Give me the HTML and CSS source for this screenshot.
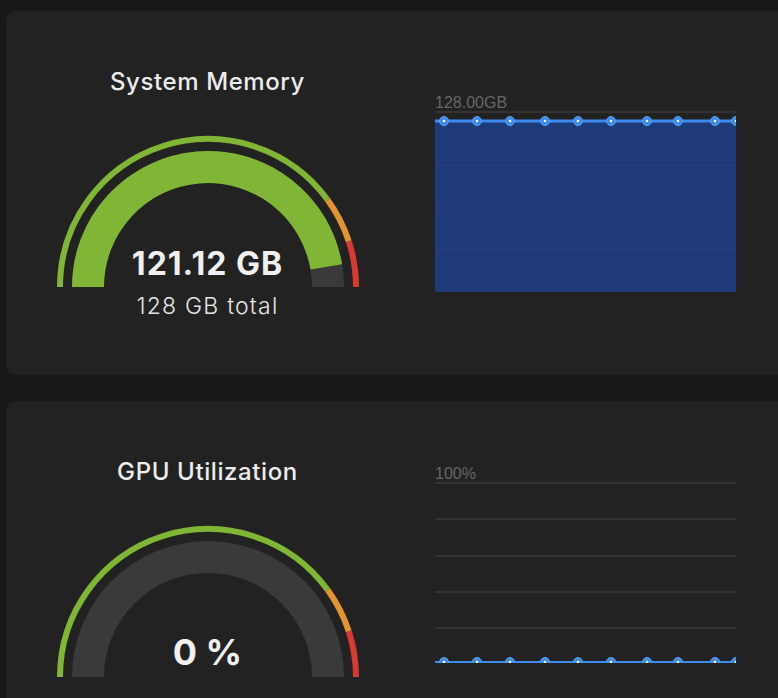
FILE: index.html
```html
<!DOCTYPE html>
<html lang="en">

<head>
    <meta charset="UTF-8">
    <meta name="viewport" content="width=device-width, initial-scale=1.0">
    <title>System Monitor</title>
    <link rel="stylesheet" href="styles.css">
</head>

<body>
    <div class="dashboard">
        <!-- memory card -->
        <div class="card">
            <div class="gauge-panel">
                <div class="gauge-title">System Memory</div>
                <div class="gauge">
                    <svg width="302" height="152" viewBox="0 0 302 152">
                        <path d="M3 152 A148 148 0 0 1 270.73 65.01" class="ring green" />
                        <path d="M270.73 65.01 A148 148 0 0 1 291.76 106.27" class="ring orange" />
                        <path d="M291.76 106.27 A148 148 0 0 1 299 152" class="ring red" />
                        <path d="M31 152 A120 120 0 0 1 271 152" class="band empty" />
                        <path d="M31 152 A120 120 0 0 1 269.29 131.83" class="band filled" />
                    </svg>
                    <div class="gauge-value">121.12 GB</div>
                </div>
                <div class="gauge-sub">128 GB total</div>
            </div>
            <div class="chart-panel">
                <div class="chart-label">128.00GB</div>
                <svg class="chart" width="301" height="181" viewBox="0 0 301 181">
                    <rect x="0" y="10" width="301" height="171" class="area" />
                    <line x1="0" y1="1" x2="301" y2="1" class="grid" />
                    <line x1="0" y1="54" x2="301" y2="54" class="grid faint" />
                    <line x1="0" y1="97" x2="301" y2="97" class="grid faint" />
                    <line x1="0" y1="139" x2="301" y2="139" class="grid faint" />
                    <line x1="0" y1="10" x2="301" y2="10" class="plot" />
                    <g id="mem-points"></g>
                </svg>
            </div>
        </div>

        <!-- gpu card -->
        <div class="card">
            <div class="gauge-panel">
                <div class="gauge-title">GPU Utilization</div>
                <div class="gauge">
                    <svg width="302" height="152" viewBox="0 0 302 152">
                        <path d="M3 152 A148 148 0 0 1 270.73 65.01" class="ring green" />
                        <path d="M270.73 65.01 A148 148 0 0 1 291.76 106.27" class="ring orange" />
                        <path d="M291.76 106.27 A148 148 0 0 1 299 152" class="ring red" />
                        <path d="M31 152 A120 120 0 0 1 271 152" class="band empty" />
                    </svg>
                    <div class="gauge-value big">0 %</div>
                </div>
            </div>
            <div class="chart-panel raised">
                <div class="chart-label">100%</div>
                <svg class="chart" width="301" height="181" viewBox="0 0 301 181">
                    <line x1="0" y1="1" x2="301" y2="1" class="grid" />
                    <line x1="0" y1="37" x2="301" y2="37" class="grid" />
                    <line x1="0" y1="74" x2="301" y2="74" class="grid" />
                    <line x1="0" y1="110" x2="301" y2="110" class="grid" />
                    <line x1="0" y1="146" x2="301" y2="146" class="grid" />
                    <line x1="0" y1="180" x2="301" y2="180" class="plot thin" />
                    <g id="gpu-points"></g>
                </svg>
            </div>
        </div>
    </div>

    <script>
        const sampleX = [9, 42, 75, 110, 143, 176, 212, 243, 280, 301];
        const NS = 'http://www.w3.org/2000/svg';

        function drawPoints(groupId, y) {
            const group = document.getElementById(groupId);
            sampleX.forEach(x => {
                const dot = document.createElementNS(NS, 'circle');
                dot.setAttribute('cx', x);
                dot.setAttribute('cy', y);
                dot.setAttribute('r', 4.5);
                dot.setAttribute('class', 'point');
                group.appendChild(dot);

                const core = document.createElementNS(NS, 'circle');
                core.setAttribute('cx', x);
                core.setAttribute('cy', y);
                core.setAttribute('r', 1.3);
                core.setAttribute('class', 'point-core');
                group.appendChild(core);
            });
        }

        drawPoints('mem-points', 10);
        drawPoints('gpu-points', 180);
    </script>
</body>

</html>
```

FILE: styles.css
```css
html,
body {
    margin: 0;
    overflow: hidden;
}

body {
    background-color: #181818;
    font-family: Inter, "Noto Sans", sans-serif;
    color: #ececec;
}

.dashboard {
    display: flex;
    flex-direction: column;
    gap: 26px;
    padding: 11px 0 0 6px;
}

.card {
    display: flex;
    align-items: center;
    width: 820px;
    padding: 56px 0;
    background-color: #222222;
    border-radius: 10px;
}

.gauge-panel {
    width: 403px;
    display: flex;
    flex-direction: column;
    align-items: center;
}

.gauge-title {
    font-size: 24px;
    line-height: 30px;
    font-weight: 500;
    letter-spacing: 0.6px;
    margin-bottom: 38px;
}

.gauge {
    position: relative;
    width: 302px;
    height: 152px;
}

.gauge svg {
    display: block;
}

.ring {
    fill: none;
    stroke-width: 6;
}

.band {
    fill: none;
    stroke-width: 32;
}

.green {
    stroke: #80b535;
}

.orange {
    stroke: #e29431;
}

.red {
    stroke: #d63a31;
}

.empty {
    stroke: #3a3a3a;
}

.filled {
    stroke: #80b535;
}

.gauge-value {
    position: absolute;
    left: 0;
    right: 0;
    bottom: 4px;
    text-align: center;
    font-size: 32px;
    line-height: 38px;
    font-weight: 700;
    letter-spacing: 1px;
    color: #f0f0f0;
}

.gauge-value.big {
    font-size: 36px;
    line-height: 42px;
    letter-spacing: 0;
}

.gauge-sub {
    margin-top: 6px;
    font-size: 23px;
    line-height: 26px;
    font-weight: 300;
    letter-spacing: 1.2px;
    color: #e6e6e6;
}

.chart-panel {
    margin-left: 26px;
    width: 301px;
}

.chart-panel.raised {
    margin-bottom: 6px;
}

.chart-label {
    font-family: "Liberation Sans", Arial, sans-serif;
    font-size: 16px;
    line-height: 16px;
    color: #666666;
}

.chart {
    display: block;
}

.area {
    fill: #1e3a78;
}

.grid {
    stroke: rgba(255, 255, 255, 0.08);
    stroke-width: 2;
}

.grid.faint {
    stroke: rgba(255, 255, 255, 0.025);
}

.plot {
    stroke: #3d8bef;
    stroke-width: 3;
}

.plot.thin {
    stroke-width: 2;
}

.point {
    fill: #3d8bef;
    stroke: #5aa0f5;
    stroke-width: 1;
}

.point-core {
    fill: #ffffff;
}
```
